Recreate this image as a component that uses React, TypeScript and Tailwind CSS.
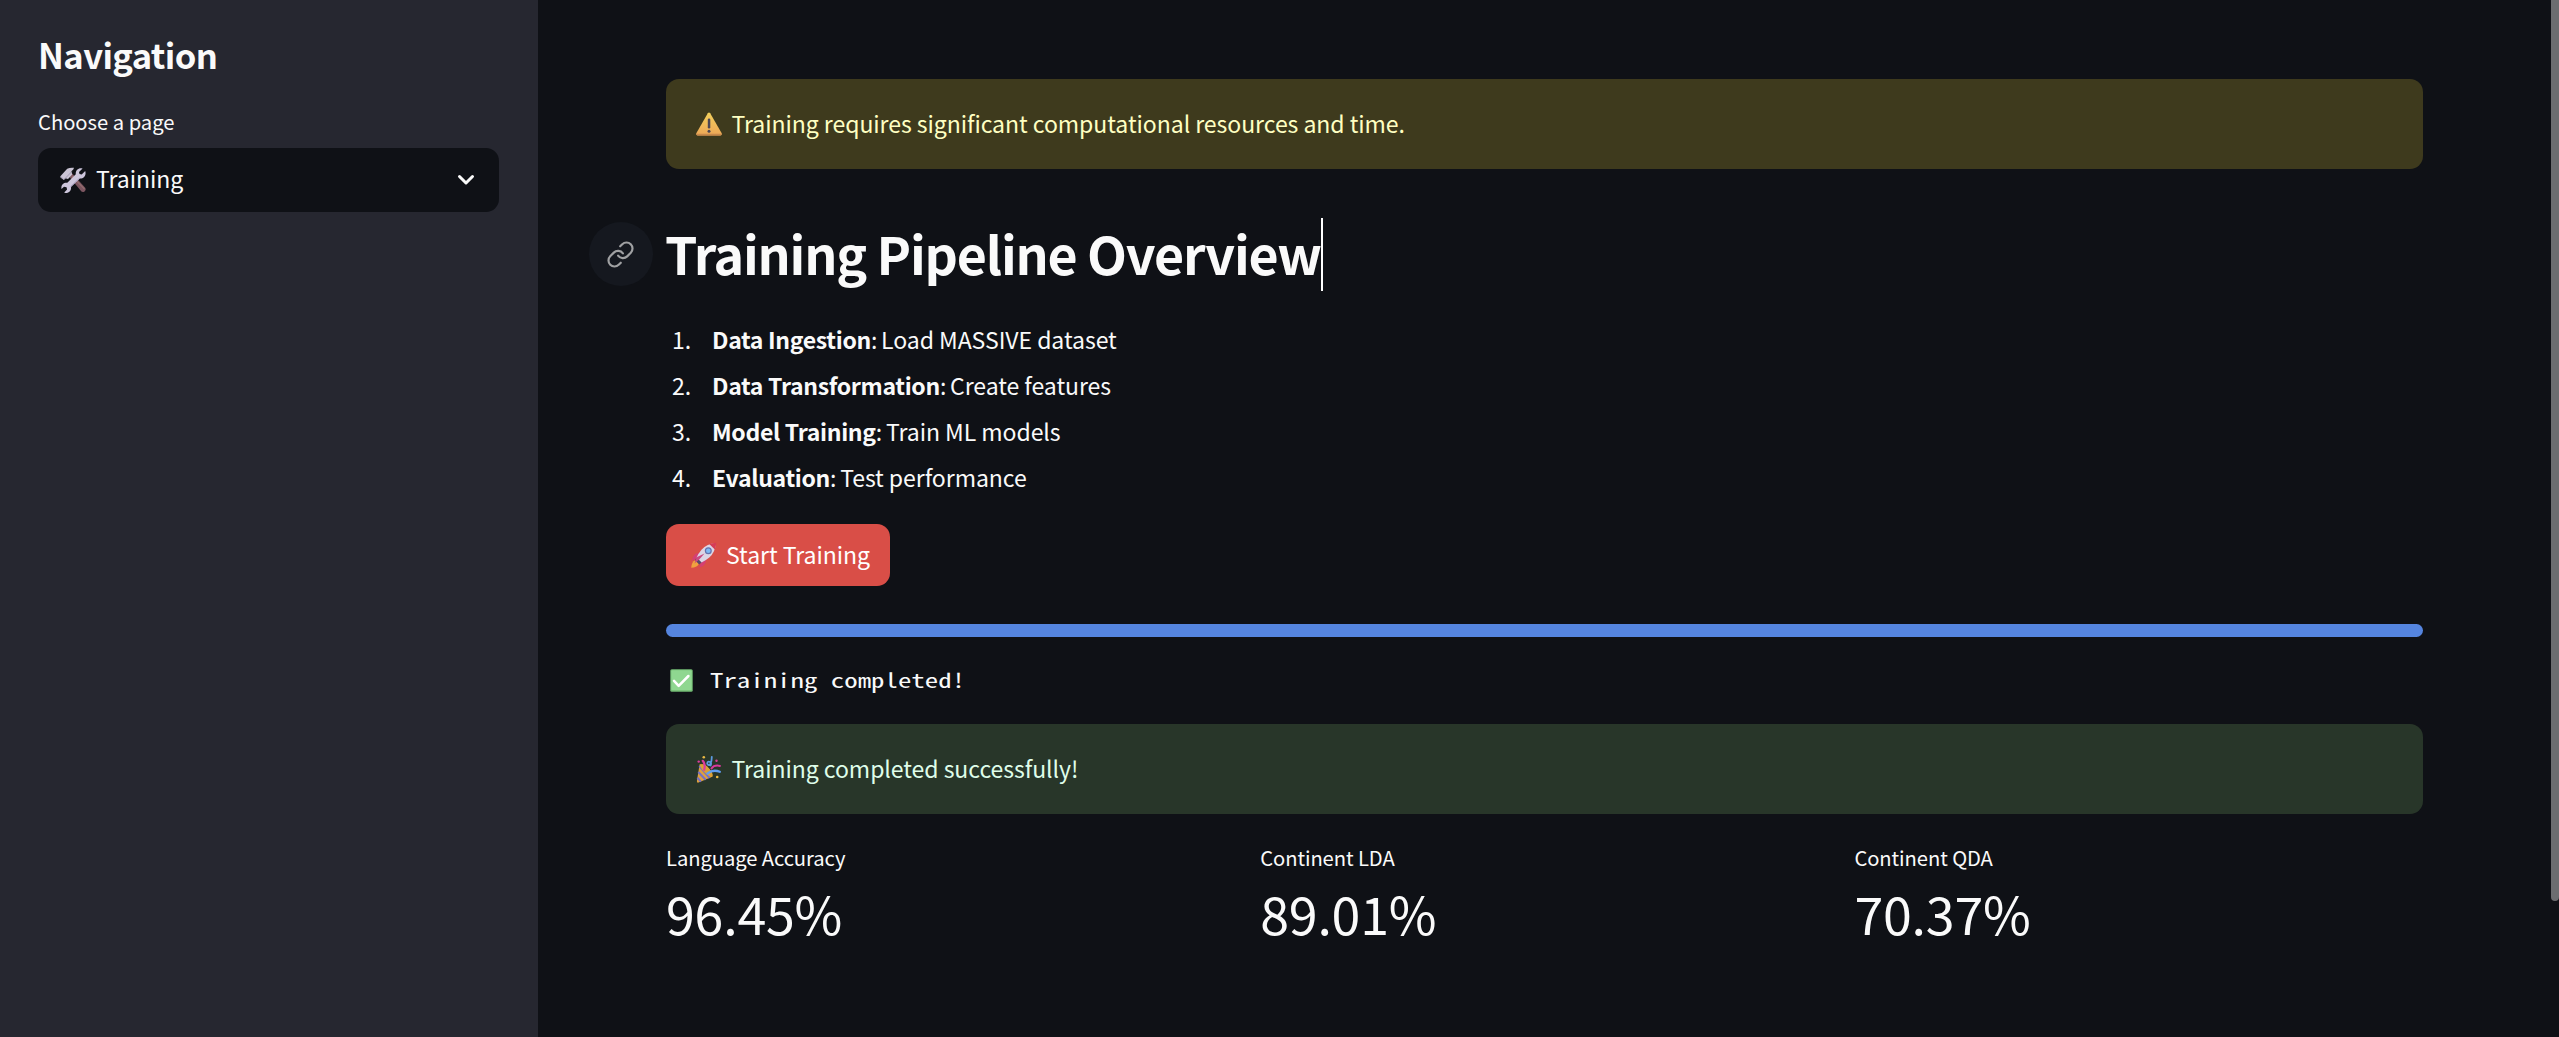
import type { ReactNode } from "react";

const steps = [
  { name: "Data Ingestion", detail: "Load MASSIVE dataset" },
  { name: "Data Transformation", detail: "Create features" },
  { name: "Model Training", detail: "Train ML models" },
  { name: "Evaluation", detail: "Test performance" },
];

const metrics = [
  { label: "Language Accuracy", value: "96.45%" },
  { label: "Continent LDA", value: "89.01%" },
  { label: "Continent QDA", value: "70.37%" },
];

function ToolsIcon() {
  return (
    <svg viewBox="0 0 26 26" className="h-[26px] w-[26px] shrink-0">
      <path d="M9 9.5 12.2 6.6 25.2 20.8q1 1.600-.4 3.400-1.800 1.500-3.400.4Z" fill="#7b5560" />
      <path d="m12 9 12.500 13.200" stroke="#946e70" strokeWidth="1.200" />
      <path d="M.4 9.200 7.200 1.800Q10 .3 14 .8L13.300 2.500 11.400 4.200 12.200 7.400 8 12 5.200 11.300 3.900 13 .4 10.500Z" fill="#c9c3d4" />
      <path d="m4 12.600 7.600-7.800M.8 9.700l2.700 2.500" stroke="#a39bb3" strokeWidth="1" />
      <path d="M22.600 1.400 19 5l.5 2 2.200.4 3.500-3.400c1.400 4.200-1.200 7.800-5.400 7.600L11 20c.6 3.900-2 6.500-5.800 6l-1-.5 2.900-3-.6-2.300-2.500-.4L1.500 22C.7 18 3.500 15.200 7.300 15.700l8.500-8.400C15.300 3.200 18.500.2 22.600 1.400Z" fill="#cdc6dc" />
      <path d="M19.500 11.200 10.500 19.700" stroke="#aaa0c4" strokeWidth="1" />
    </svg>
  );
}

function WarningIcon() {
  return (
    <svg viewBox="0 0 26 24" className="h-6 w-[26px] shrink-0">
      <defs>
        <linearGradient id="warn" x1="0" y1="0" x2="0" y2="1">
          <stop offset="0" stopColor="#f2cf5c" />
          <stop offset="1" stopColor="#eda757" />
        </linearGradient>
      </defs>
      <path d="M11.800 1.300q1.200-1.600 2.400 0L25.700 21.200q.6 2-1.300 2.200H1.600Q-.3 23.200.3 21.200Z" fill="url(#warn)" />
      <path d="M.3 21.800q0 1.500 1.300 1.600h22.800q1.300-.1 1.300-1.600Z" fill="#c98a4c" />
      <rect x="11.800" y="6.500" width="2.500" height="10" rx="1.200" fill="#4c4654" />
      <circle cx="13" cy="19.300" r="1.500" fill="#4c4654" />
    </svg>
  );
}

function RocketIcon() {
  return (
    <svg viewBox="0 0 26 26" className="h-[26px] w-[26px] shrink-0">
      <path d="M9.500 10.500 4.500 11.800Q1.500 14.500 1 18.500l5.500-2ZM15.500 16.500l-1.300 5Q12.500 24.800 8.500 25.500l1.500-6.500Z" fill="#d53f72" />
      <path d="M4.200 18.200Q.5 19.800.2 25.800q5.500 0 7.600-3.800Z" fill="#f0a23e" />
      <path d="m4 18 2.200-2.800L11 20l-2.800 2.500Z" fill="#594a68" />
      <path d="M24.800 1.200Q16 1.500 10.500 7.700 7 12 5.600 15.400l5 5Q15 18.300 18.300 15.500 24.400 10 24.800 1.200Z" fill="#dcd5e5" />
      <path d="M18.500 2.200Q21.500 1 25.200.8q-.2 3.800-1.400 6.700Z" fill="#d63c55" />
      <path d="m13.500 11.500-5 5.800L3.500 21.500l2-6.300Z" fill="#c94a82" />
      <circle cx="17.300" cy="8.700" r="3.500" fill="#6572ae" />
      <circle cx="17.300" cy="8.700" r="2.300" fill="#7eb9f4" />
    </svg>
  );
}

function CheckIcon() {
  return (
    <svg viewBox="0 0 23 23" className="h-[23px] w-[23px] shrink-0">
      <rect x=".3" y=".3" width="22.400" height="22.400" rx="1.500" fill="#74bd75" />
      <rect x="1.300" y="1.200" width="20.400" height="20" rx="1" fill="#8fd790" />
      <path d="m4 11.800 4.700 5L18.400 7" fill="none" stroke="#fff" strokeWidth="2.500" strokeLinecap="round" strokeLinejoin="round" />
    </svg>
  );
}

function PartyIcon() {
  return (
    <svg viewBox="0 0 26 28" className="h-7 w-[26px] shrink-0">
      <path d="M3.600 9.500Q9 8 13 13.500q4.500 5 3.300 8.300L2.500 27.600Q.7 28 .9 26Z" fill="#e0a03c" />
      <path d="M3.300 11.200 13.600 23M2.300 17l7.300 7.700M1.400 22.800l3.500 3.800" stroke="#7470c4" strokeWidth="2" />
      <path d="M3.600 9.500Q9 8 13 13.500q4.500 5 3.300 8.300-4.300-.5-8.300-5-4-4.300-4.400-7.300Z" fill="#d9a035" />
      <path d="M6.700 5.800q3 3.400 1.500 9" fill="none" stroke="#dc3b9c" strokeWidth="2.200" strokeLinecap="round" />
      <path d="M15.800 1.800q-.1 6.400-2.200 8-2 .8-2.400-1.500.4-2.500 3-1.300 1.500 1.400.4 3.500" fill="none" stroke="#5c9be1" strokeWidth="1.800" strokeLinecap="round" />
      <path d="M15.500 13.500q2.500-3.800 8.500-2.600" fill="none" stroke="#d7399c" strokeWidth="2" strokeLinecap="round" />
      <path d="M11.500 18.500q5.500-4.400 12.300-1.700" fill="none" stroke="#5f9df0" strokeWidth="2.300" strokeLinecap="round" />
      <circle cx="7.800" cy="2.200" r="1.300" fill="#ebb944" />
      <circle cx="2.700" cy="6.600" r="1.200" fill="#dc3b9c" />
      <circle cx="20.500" cy="5.800" r="1.200" fill="#dc3b9c" />
      <circle cx="21.200" cy="22" r="1.300" fill="#ebb944" />
    </svg>
  );
}

function LinkIcon() {
  return (
    <svg viewBox="0 0 24 24" className="-ml-px h-[29px] w-[29px]" fill="none" stroke="#a0a1a3" strokeWidth="1.800" strokeLinecap="round" strokeLinejoin="round">
      <path d="M10 13a5 5 0 0 0 7.540.54l3-3a5 5 0 0 0-7.070-7.070l-1.720 1.710" />
      <path d="M14 11a5 5 0 0 0-7.540-.54l-3 3a5 5 0 0 0 7.070 7.070l1.710-1.710" />
    </svg>
  );
}

function Alert({ icon, className, children }: { icon: ReactNode; className: string; children: ReactNode }) {
  return (
    <div className={`flex h-[90px] items-center gap-[9.500px] rounded-[13px] pl-[30px] text-[23.05px] leading-[40px] tracking-[-0.06px] ${className}`}>
      {icon}
      <p className="-mt-[2px]">{children}</p>
    </div>
  );
}

export default function App() {
  return (
    <div className="flex h-[1037px] w-full overflow-hidden bg-[#0f1116] font-['Noto_Sans_CJK_SC',sans-serif] text-[#fafafa]">
      <aside className="w-[538px] shrink-0 bg-[#262730] px-[38px] pt-[31px]">
        <h2 className="text-[34.6px] leading-[46px] font-semibold tracking-[-0.6px]">Navigation</h2>
        <label className="mt-[28px] block text-[20.2px] leading-[34px]">Choose a page</label>
        <div className="mt-[9px] flex h-16 w-[461px] items-center rounded-[13px] bg-[#0f1116] pr-[24px] pl-[22px]">
          <ToolsIcon />
          <span className="-mt-[5px] ml-[10px] text-[23.05px] leading-[40px] tracking-[-0.06px]">Training</span>
          <svg viewBox="0 0 18 12" className="ml-auto h-3 w-[18px]" fill="none" stroke="#fafafa" strokeWidth="3" strokeLinecap="round" strokeLinejoin="round">
            <path d="m2.500 2.500 6.500 6.500 6.500-6.500" />
          </svg>
        </div>
      </aside>

      <main className="relative min-w-0 flex-1 pl-32">
        <div className="flex w-[1757px] flex-col pt-[79px]">
          <Alert icon={<WarningIcon />} className="bg-[#3e3a1d] text-[#ffffc2]">
            Training requires significant computational resources and time.
          </Alert>

          <div className="relative mt-[46px] flex h-[74px] items-start">
            <span className="absolute top-[7px] -left-[77px] flex h-16 w-16 items-center justify-center rounded-full bg-[#15181f]">
              <LinkIcon />
            </span>
            <h1 className="mt-px -ml-px text-[51.9px] leading-[74px] font-semibold tracking-[-1.2px]">Training Pipeline Overview</h1>
            <span className="mt-[3px] h-[73px] w-[2px] bg-white" />
          </div>

          <ol className="mt-[27px] text-[23.05px] leading-[46px] tracking-[-0.06px]">
            {steps.map((step, i) => (
              <li key={step.name} className="flex">
                <span className="w-[46px] pl-[6px]">{i + 1}.</span>
                <strong className="font-semibold tracking-[-0.33px]">{step.name}</strong>
                <span>:</span>
                <span className="ml-[3.800px]">{step.detail}</span>
              </li>
            ))}
          </ol>

          <button className="mt-6 flex h-[62px] w-56 items-center rounded-[13px] bg-[#d94e47] pl-[25px] text-[23.05px] leading-[40px] tracking-[-0.06px] text-white">
            <RocketIcon />
            <span className="-mt-[2px] ml-[9px]">Start Training</span>
          </button>

          <div className="mt-[38px] h-[13px] rounded-full bg-[#5585df]" />

          <div className="mt-[25px] flex h-9 items-center pl-1">
            <CheckIcon />
            <span className="ml-[17px] origin-left scale-x-[1.330] font-['Noto_Sans_Mono_CJK_SC','Liberation_Mono',monospace] text-[20.2px] leading-9">Training completed!</span>
          </div>

          <Alert icon={<PartyIcon />} className="mt-[26px] bg-[#283629] text-[#dffde9]">
            Training completed successfully!
          </Alert>

          <div className="mt-7 grid grid-cols-3 gap-[25.6px]">
            {metrics.map((m) => (
              <div key={m.label}>
                <div className="text-[20.2px] leading-8 tracking-[-0.08px]">{m.label}</div>
                <div className="mt-1 text-[51.9px] leading-[70px] tracking-[-0.2px]">{m.value}</div>
              </div>
            ))}
          </div>
        </div>
        <div className="absolute top-0 right-0 h-[901px] w-2 rounded-b-full bg-[#6c6d70]" />
      </main>
    </div>
  );
}
